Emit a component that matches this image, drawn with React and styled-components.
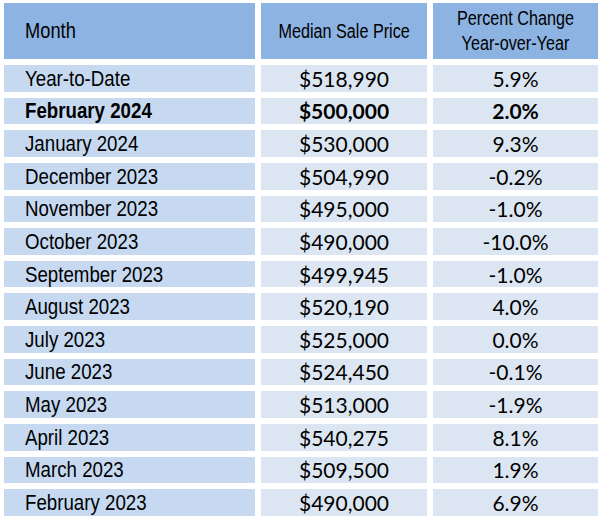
import React from "react";
import styled, { createGlobalStyle } from "styled-components";

const GlobalStyle = createGlobalStyle`
  html, body { margin: 0; padding: 0; background: #ffffff; }
  body { padding: 3px 0 0 4px; }
`;

const arial = `"Liberation Sans", Arial, sans-serif`;
const calibriLike = `Lato, "Open Sans", sans-serif`;

const Table = styled.div`
  display: grid;
  grid-template-columns: 251px 166px 165px;
  grid-template-rows: 56px repeat(14, 26.64px);
  column-gap: 6px;
  row-gap: 6px;
  width: 594px;
  color: #000;
`;

/* condensed text: Arial metrics squeezed to the narrow face of the reference */
const Narrow = styled.span`
  display: inline-block;
  font-family: ${arial};
  transform: scaleX(${(p) => p.$scale || 0.85});
  transform-origin: ${(p) => (p.$center ? "center" : "left")};
  white-space: nowrap;
`;

const HeadCell = styled.div`
  background: #8db3e2;
  display: flex;
  align-items: center;
  justify-content: ${(p) => (p.$left ? "flex-start" : "center")};
  padding-left: ${(p) => (p.$left ? "21px" : "0")};
  font-size: ${(p) => (p.$left ? "21.5px" : "19.5px")};
  line-height: 25px;
  text-align: center;
  padding-top: ${(p) => (p.$left ? "1px" : "0")};
`;

const MonthCell = styled.div`
  background: #c6d9f1;
  display: flex;
  align-items: center;
  padding-left: 21px;
  font-size: 22px;
  font-weight: ${(p) => (p.$bold ? 700 : 400)};
  padding-top: 1px;
`;

const ValueCell = styled.div`
  background: #dce6f2;
  display: flex;
  align-items: center;
  justify-content: center;
  font-family: ${calibriLike};
  font-size: 21px;
  font-weight: ${(p) => (p.$bold ? 700 : 400)};
  white-space: nowrap;
`;

const rows = [
  ["Year-to-Date", "$518,990", "5.9%"],
  ["February 2024", "$500,000", "2.0%", true],
  ["January 2024", "$530,000", "9.3%"],
  ["December 2023", "$504,990", "-0.2%"],
  ["November 2023", "$495,000", "-1.0%"],
  ["October 2023", "$490,000", "-10.0%"],
  ["September 2023", "$499,945", "-1.0%"],
  ["August 2023", "$520,190", "4.0%"],
  ["July 2023", "$525,000", "0.0%"],
  ["June 2023", "$524,450", "-0.1%"],
  ["May 2023", "$513,000", "-1.9%"],
  ["April 2023", "$540,275", "8.1%"],
  ["March 2023", "$509,500", "1.9%"],
  ["February 2023", "$490,000", "6.9%"],
];

export default function App() {
  return (
    <>
      <GlobalStyle />
      <Table>
        <HeadCell $left>
          <Narrow>Month</Narrow>
        </HeadCell>
        <HeadCell>
          <Narrow $center $scale={0.83}>Median Sale Price</Narrow>
        </HeadCell>
        <HeadCell>
          <Narrow $center $scale={0.83}>
            Percent Change
            <br />
            Year-over-Year
          </Narrow>
        </HeadCell>
        {rows.map(([m, p, c, b]) => (
          <React.Fragment key={m}>
            <MonthCell $bold={b}>
              <Narrow>{m}</Narrow>
            </MonthCell>
            <ValueCell $bold={b}>{p}</ValueCell>
            <ValueCell $bold={b}>{c}</ValueCell>
          </React.Fragment>
        ))}
      </Table>
    </>
  );
}
